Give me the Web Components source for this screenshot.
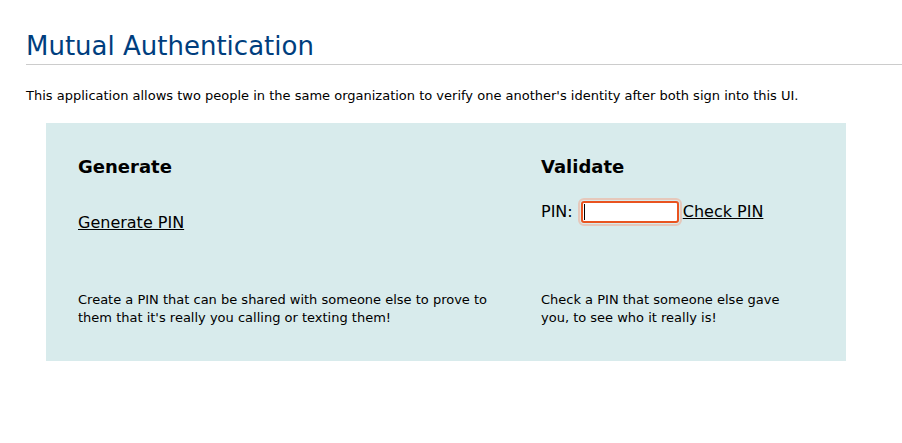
<!DOCTYPE html>
<html lang="en">
<head>
<meta charset="utf-8">
<title>Mutual Authentication</title>
<style>
body { margin: 0; background: #fff; color: #000; font-family: Verdana, "DejaVu Sans", sans-serif; font-size: 13px; line-height: 18px; }
</style>
</head>
<body>
<mutual-auth-page></mutual-auth-page>
<script>
const define = (name, html) => customElements.define(name, class extends HTMLElement {
  constructor() {
    super();
    this.attachShadow({ mode: "open" }).innerHTML = html;
  }
});

define("page-title", `
<style>
:host { display: block; border-bottom: 1px solid #ccc; }
h1 { margin: 0; font-size: 26px; line-height: 36px; font-weight: 400; color: #003e7e; }
</style>
<h1><slot></slot></h1>`);

define("auth-card", `
<style>
:host { display: grid; grid-template-rows: 32px 1fr auto; }
h2 { margin: 0; font-size: 18px; line-height: 24px; }
.action { font-size: 16px; line-height: 24px; }
p { margin: 0; padding-bottom: 2px; }
</style>
<h2><slot name="heading"></slot></h2>
<div class="action"><slot></slot></div>
<p><slot name="note"></slot></p>`);

define("generate-action", `
<style>
:host { display: block; padding-top: 24px; }
a { color: inherit; }
</style>
<a href="#generate">Generate PIN</a>`);

/* The empty PIN field is shown focused, with a steady one-pixel caret. */
define("validate-action", `
<style>
:host { display: flex; align-items: center; padding-top: 13px; }
label { margin-right: 8px; }
a { color: inherit; margin-left: 4px; }
input { box-sizing: border-box; width: 98px; height: 22px; margin: 0; padding: 1px; border: 2px solid #e95420; border-radius: 3px; outline: 2px solid #e6c8bb; outline-offset: 1px; background: linear-gradient(#000, #000) 1px 1px / 1px 16px no-repeat #fff; caret-color: transparent; font: inherit; font-size: 13px; }
</style>
<label for="pin">PIN:</label><input id="pin" type="text" autocomplete="off"><a href="#check">Check PIN</a>`);

define("mutual-auth-page", `
<style>
:host { display: block; padding: 28px 0 0 26px; }
.intro { margin: 22px 0 18px; }
.panel { display: grid; grid-template-columns: minmax(0, 431fr) minmax(0, 273fr); column-gap: 32px; box-sizing: border-box; max-width: 800px; margin: 0 20px; padding: 32px; background: #d8ebec; }
auth-card { min-height: 174px; }
.narrow { display: block; max-width: 260px; }
</style>
<page-title>Mutual Authentication</page-title>
<p class="intro">This application allows two people in the same organization to verify one another's identity after both sign into this UI.</p>
<main class="panel">
<auth-card><span slot="heading">Generate</span><generate-action></generate-action><span slot="note">Create a PIN that can be shared with someone else to prove to them that it's really you calling or texting them!</span></auth-card>
<auth-card><span slot="heading">Validate</span><validate-action></validate-action><span class="narrow" slot="note">Check a PIN that someone else gave you, to see who it really is!</span></auth-card>
</main>`);
</script>
</body>
</html>
